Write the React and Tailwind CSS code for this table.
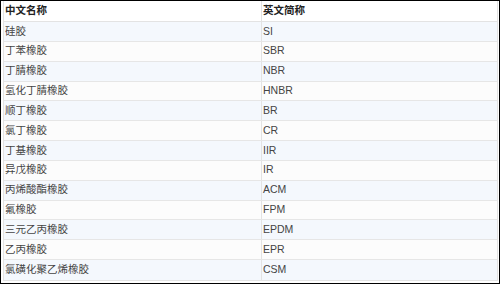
import React from 'react';

const rows = [
  ['硅胶', 'SI'],
  ['丁苯橡胶', 'SBR'],
  ['丁腈橡胶', 'NBR'],
  ['氢化丁腈橡胶', 'HNBR'],
  ['顺丁橡胶', 'BR'],
  ['氯丁橡胶', 'CR'],
  ['丁基橡胶', 'IIR'],
  ['异戊橡胶', 'IR'],
  ['丙烯酸酯橡胶', 'ACM'],
  ['氟橡胶', 'FPM'],
  ['三元乙丙橡胶', 'EPDM'],
  ['乙丙橡胶', 'EPR'],
  ['氯磺化聚乙烯橡胶', 'CSM'],
];

const font = { fontFamily: '"Liberation Sans", "Noto Sans CJK SC", sans-serif' };

export default function App() {
  return (
    <div className="w-[500px] h-[284px] bg-white border border-black pl-[2px] pr-px pb-px flex flex-col" style={font}>
      <div className="flex flex-col border-x border-b border-[#e3e3e3] text-[10.5px] text-[#444]">
        {/* header */}
        <div className="flex h-[21px] border-b border-[#e3e3e3] bg-white font-bold text-[#222]">
          <div className="w-[258px] border-r border-[#e3e3e3] pl-px flex items-center">中文名称</div>
          <div className="flex-1 pl-px flex items-center">英文简称</div>
        </div>
        {rows.map(([zh, en], i) => (
          <div
            key={en}
            className={`flex h-[19.85px] border-b border-[#e6e6e6] last:border-b-0 ${i % 2 === 0 ? 'bg-[#f4f8fd]' : 'bg-[#fcfcfc]'}`}
          >
            <div className="w-[258px] border-r border-[#e3e3e3] pl-px flex items-center">{zh}</div>
            <div className="flex-1 pl-px flex items-center">{en}</div>
          </div>
        ))}
      </div>
    </div>
  );
}
